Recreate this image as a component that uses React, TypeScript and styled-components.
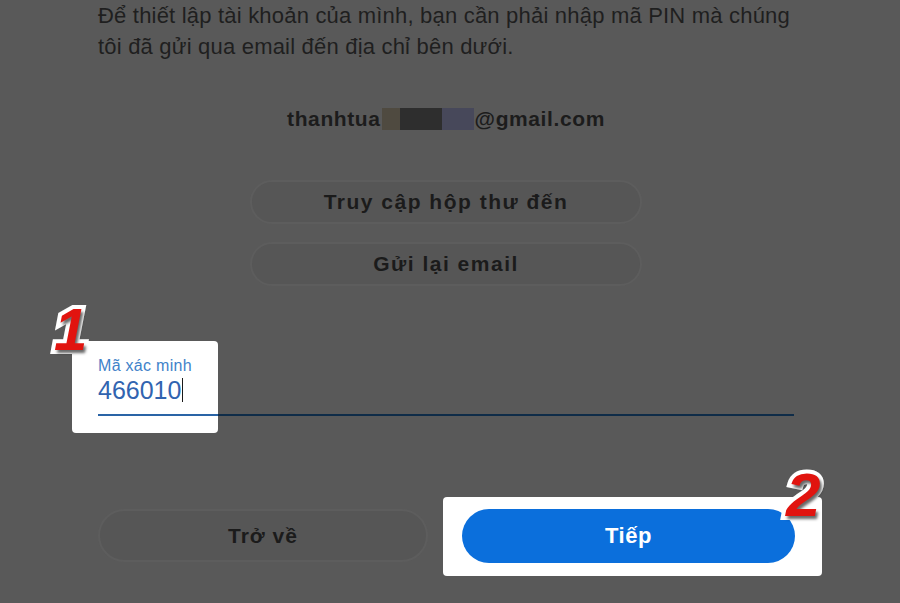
import styled, { createGlobalStyle } from "styled-components";

const GlobalStyle = createGlobalStyle`
  html, body {
    margin: 0;
    padding: 0;
    background: #595959;
    font-family: "Liberation Sans", Arial, sans-serif;
  }
`;

const Page = styled.div`
  width: 900px;
  height: 603px;
  overflow: hidden;
  background: #595959;
`;

const Column = styled.div`
  width: 696px;
  margin-left: 98px;
  display: flex;
  flex-direction: column;
`;

const Intro = styled.p`
  margin: 0;
  font-size: 22px;
  line-height: 31px;
  letter-spacing: 0.2px;
  color: #1f1f1f;
  width: 700px;
`;

const Email = styled.div`
  margin-top: 45px;
  display: flex;
  justify-content: center;
  align-items: center;
  font-size: 21px;
  font-weight: 700;
  color: #1c1c1c;
  letter-spacing: 0.6px;
`;

const Blur = styled.span`
  display: inline-flex;
  height: 22px;
  margin: 0 1px;
`;

const BlurPiece = styled.span<{ $w: number; $c: string }>`
  width: ${(p) => p.$w}px;
  background: ${(p) => p.$c};
`;

const Actions = styled.div`
  margin-top: 49px;
  display: flex;
  flex-direction: column;
  align-items: center;
  gap: 18px;
`;

const GhostButton = styled.button<{ $w: number }>`
  width: ${(p) => p.$w}px;
  height: 44px;
  border-radius: 22px;
  border: 2px solid #5d5d5d;
  background: #565656;
  color: #1b1b1b;
  font-family: "Liberation Sans", Arial, sans-serif;
  font-size: 21px;
  font-weight: 700;
  letter-spacing: 1.5px;
  cursor: pointer;
`;

const Field = styled.div`
  position: relative;
  margin-top: 72px;
  height: 72px;
  display: flex;
  flex-direction: column;
`;

const Spotlight = styled.div<{ $top: number; $left: number; $w: number; $h: number }>`
  position: absolute;
  top: ${(p) => p.$top}px;
  left: ${(p) => p.$left}px;
  width: ${(p) => p.$w}px;
  height: ${(p) => p.$h}px;
  background: #ffffff;
  border-radius: 4px;
  z-index: 0;
`;

const Label = styled.label`
  position: relative;
  z-index: 1;
  font-size: 16px;
  letter-spacing: 0.3px;
  color: #3f82c9;
  line-height: 16px;
`;

const Value = styled.div`
  position: relative;
  z-index: 1;
  margin-top: 1px;
  font-size: 25px;
  line-height: 30px;
  color: #3164b0;
  display: flex;
  align-items: center;
`;

const Caret = styled.span`
  width: 1px;
  height: 24px;
  background: #1a1a1a;
  margin-left: 1px;
`;

const Underline = styled.div`
  position: relative;
  z-index: 1;
  margin-top: 9px;
  height: 2px;
  background: linear-gradient(to right, #2a64a6 0 120px, #0f2c48 120px);
`;

const Footer = styled.div`
  margin-top: 79px;
  display: flex;
  gap: 34px;
`;

const FooterSlot = styled.div`
  position: relative;
  display: flex;
`;

const BackButton = styled(GhostButton)`
  height: 53px;
  border-radius: 27px;
  letter-spacing: 1px;
`;

const NextButton = styled.button`
  position: relative;
  z-index: 1;
  width: 333px;
  height: 54px;
  border: none;
  border-radius: 27px;
  background: #0b6fdc;
  color: #ffffff;
  font-family: "Liberation Sans", Arial, sans-serif;
  font-size: 22px;
  font-weight: 700;
  letter-spacing: 0.5px;
  cursor: pointer;
`;

const Badge = styled.span<{ $top: number; $left: number; $size: number }>`
  position: absolute;
  top: ${(p) => p.$top}px;
  left: ${(p) => p.$left}px;
  z-index: 2;
  font-family: "Liberation Sans", Arial, sans-serif;
  font-size: ${(p) => p.$size}px;
  font-weight: 700;
  font-style: italic;
  line-height: 1;
  color: #e1140f;
  -webkit-text-stroke: 8px #ffffff;
  paint-order: stroke fill;
  text-shadow: 2px 3px 3px rgba(0, 0, 0, 0.6);
`;

export default function App() {
  return (
    <Page>
      <GlobalStyle />
      <Column>
        <Intro>
          Để thiết lập tài khoản của mình, bạn cần phải nhập mã PIN mà chúng tôi đã gửi qua email đến địa chỉ
          bên dưới.
        </Intro>

        <Email>
          thanhtua
          <Blur>
            <BlurPiece $w={18} $c="#4f4a40" />
            <BlurPiece $w={42} $c="#2e2e2e" />
            <BlurPiece $w={32} $c="#47485a" />
          </Blur>
          @gmail.com
        </Email>

        <Actions>
          <GhostButton $w={392}>Truy cập hộp thư đến</GhostButton>
          <GhostButton $w={392}>Gửi lại email</GhostButton>
        </Actions>

        <Field>
          <Spotlight $top={-17} $left={-26} $w={146} $h={92} />
          <Badge $top={-58} $left={-44} $size={60}>
            1
          </Badge>
          <Label>Mã xác minh</Label>
          <Value>
            466010
            <Caret />
          </Value>
          <Underline />
        </Field>

        <Footer>
          <FooterSlot>
            <BackButton $w={330}>Trở về</BackButton>
          </FooterSlot>
          <FooterSlot>
            <Spotlight $top={-12} $left={-19} $w={379} $h={79} />
            <NextButton>Tiếp</NextButton>
            <Badge $top={-45} $left={324} $size={62}>
              2
            </Badge>
          </FooterSlot>
        </Footer>
      </Column>
    </Page>
  );
}
